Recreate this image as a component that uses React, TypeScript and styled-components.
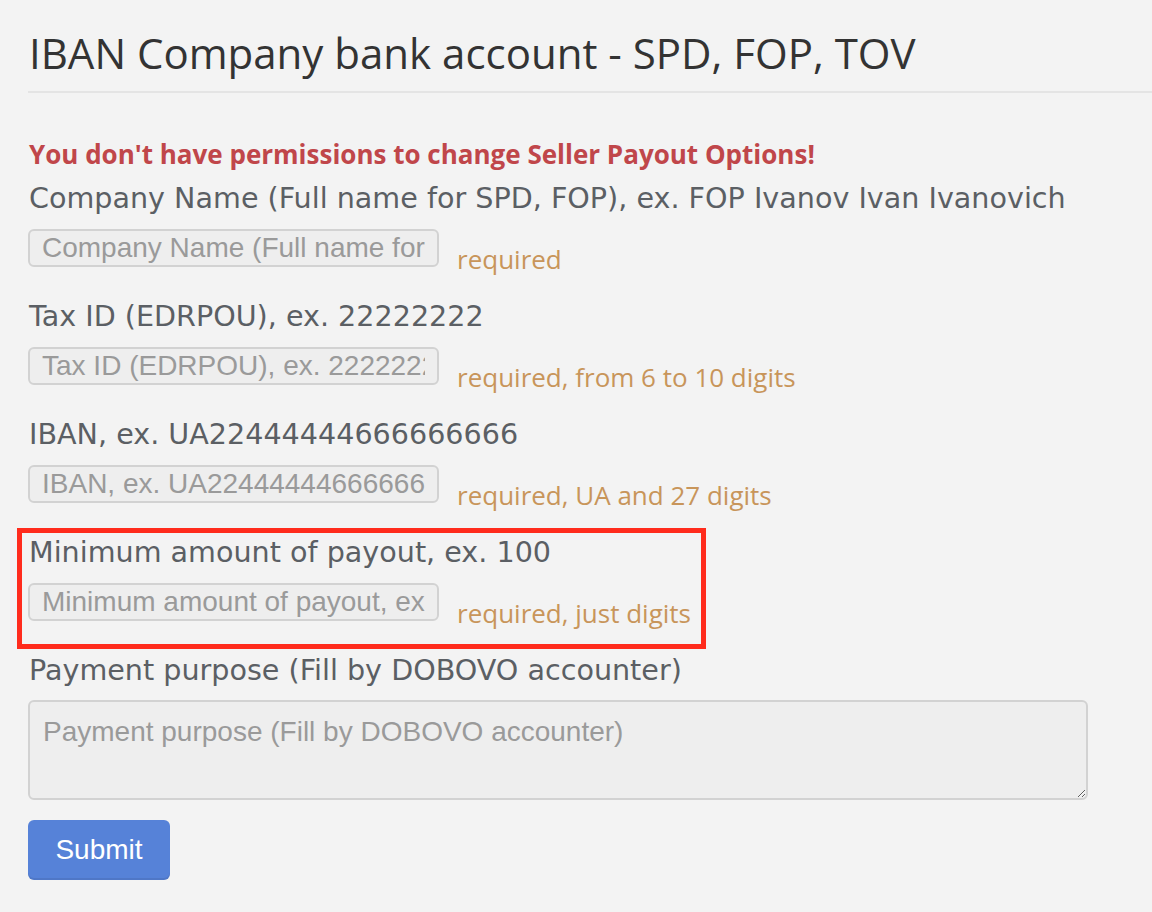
import React from "react";
import styled, { createGlobalStyle } from "styled-components";

const Global = createGlobalStyle`
  html, body { margin: 0; padding: 0; background: #f3f3f3; }
  body { font-family: "Open Sans", sans-serif; }
  *, *::before, *::after { box-sizing: border-box; }
`;

const Page = styled.div`
  padding: 28px 0 32px 28px;
  display: flex;
  flex-direction: column;
`;

const Title = styled.h1`
  margin: 0;
  font-family: "Open Sans", sans-serif;
  font-weight: 400;
  font-size: 42px;
  line-height: 50px;
  color: #333;
  padding-left: 1px;
`;

const Rule = styled.hr`
  margin: 13px 0 0 0;
  border: 0;
  height: 2px;
  background: #e4e4e4;
`;

const ErrorText = styled.div`
  margin-top: 46px;
  font-family: "Open Sans", sans-serif;
  font-weight: 700;
  font-size: 26px;
  line-height: 30px;
  color: #c0464a;
  padding-left: 1px;
`;

const Form = styled.form`
  margin-top: 11px;
  display: flex;
  flex-direction: column;
`;

const Group = styled.div<{ $highlight?: boolean }>`
  position: relative;
  display: flex;
  flex-direction: column;
  gap: 13px;
  margin-bottom: 31px;
  ${(p) =>
    p.$highlight &&
    `
    &::after {
      content: "";
      position: absolute;
      top: -6px;
      left: -11px;
      width: 689px;
      height: 121px;
      border: 5px solid #ff2b1c;
      pointer-events: none;
    }
  `}
`;

const Label = styled.label`
  font-family: "DejaVu Sans", Verdana, sans-serif;
  font-size: 28.6px;
  line-height: 36px;
  color: #5b5f64;
  padding-left: 1px;
  white-space: nowrap;
`;

const Row = styled.div`
  display: flex;
  align-items: flex-start;
  height: 38px;
`;

const Input = styled.input`
  width: 411px;
  height: 38px;
  padding: 0 12px;
  border: 2px solid #d2d2d2;
  border-radius: 6px;
  background: #eeeeee;
  font-family: "Liberation Sans", Arial, sans-serif;
  font-size: 28px;
  color: #555;
  outline: none;
  &::placeholder { color: #9a9a9a; opacity: 1; }
`;

const Help = styled.span`
  margin-left: 18px;
  margin-top: 14px;
  font-family: "Open Sans", sans-serif;
  font-size: 26px;
  line-height: 32px;
  color: #c8955a;
  white-space: nowrap;
`;

const TextArea = styled.textarea`
  width: 1060px;
  height: 100px;
  padding: 12px 13px;
  border: 2px solid #d2d2d2;
  border-radius: 6px;
  background: #eeeeee;
  font-family: "Liberation Sans", Arial, sans-serif;
  font-size: 28px;
  line-height: 36px;
  color: #555;
  outline: none;
  &::placeholder { color: #9a9a9a; opacity: 1; }
`;

const LastGroup = styled.div`
  display: flex;
  flex-direction: column;
  gap: 12px;
`;

const Button = styled.button`
  margin-top: 20px;
  align-self: flex-start;
  width: 142px;
  height: 60px;
  border: 0;
  border-radius: 6px;
  background: #5682d8;
  box-shadow: inset 0 -2px 0 rgba(0, 0, 0, 0.08);
  color: #fff;
  font-family: "Liberation Sans", Arial, sans-serif;
  font-size: 28px;
  cursor: pointer;
`;

const fields = [
  {
    label: "Company Name (Full name for SPD, FOP), ex. FOP Ivanov Ivan Ivanovich",
    help: "required",
  },
  { label: "Tax ID (EDRPOU), ex. 22222222", help: "required, from 6 to 10 digits" },
  { label: "IBAN, ex. UA22444444666666666", help: "required, UA and 27 digits" },
  { label: "Minimum amount of payout, ex. 100", help: "required, just digits", highlight: true },
];

export default function App() {
  return (
    <>
      <Global />
      <Page>
        <Title>IBAN Company bank account - SPD, FOP, TOV</Title>
        <Rule />
        <ErrorText>You don't have permissions to change Seller Payout Options!</ErrorText>
        <Form onSubmit={(e) => e.preventDefault()}>
          {fields.map((f) => (
            <Group key={f.label} $highlight={f.highlight}>
              <Label>{f.label}</Label>
              <Row>
                <Input placeholder={f.label} readOnly />
                <Help>{f.help}</Help>
              </Row>
            </Group>
          ))}
          <LastGroup>
            <Label>Payment purpose (Fill by DOBOVO accounter)</Label>
            <TextArea placeholder="Payment purpose (Fill by DOBOVO accounter)" readOnly />
          </LastGroup>
          <Button type="submit">Submit</Button>
        </Form>
      </Page>
    </>
  );
}
